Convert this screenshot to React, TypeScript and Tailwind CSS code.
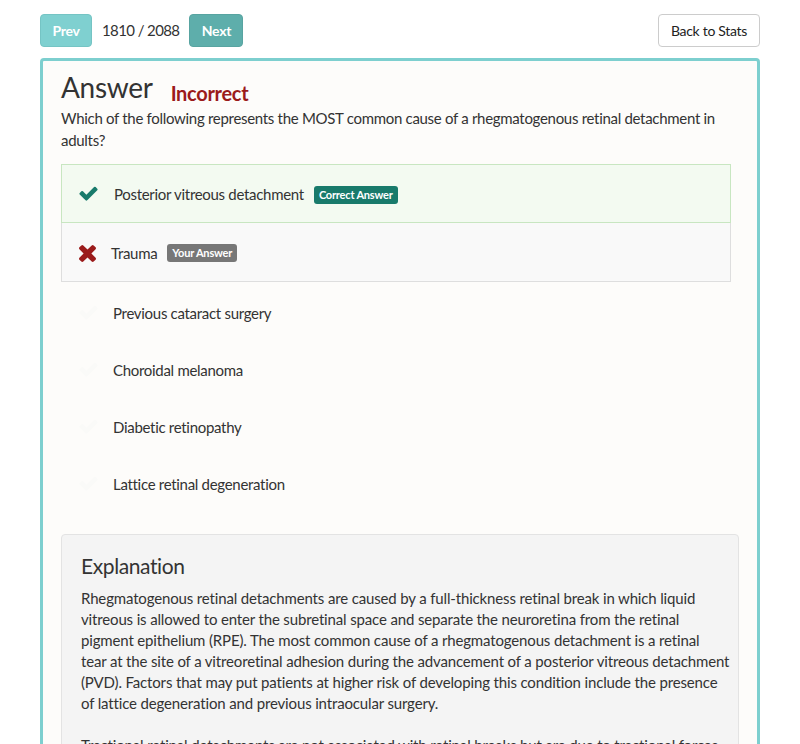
import React from "react";

const Check = ({ color }: { color: string }) => (
  <svg width="21" height="17" viewBox="0 0 1792 1408" fill={color}>
    <path d="M1671 274q0 40-28 68l-724 724-136 136q-28 28-68 28t-68-28l-136-136-362-362q-28-28-28-68t28-68l136-136q28-28 68-28t68 28l294 295 656-657q28-28 68-28t68 28l136 136q28 28 28 68z" />
  </svg>
);

const Times = ({ color }: { color: string }) => (
  <svg width="17" height="17" viewBox="0 0 1188 1188" fill={color}>
    <path d="M1188 956q0 40-28 68l-136 136q-28 28-68 28t-68-28l-294-294-294 294q-28 28-68 28t-68-28l-136-136q-28-28-28-68t28-68l294-294-294-294q-28-28-28-68t28-68l136-136q28-28 68-28t68 28l294 294 294-294q28-28 68-28t68 28l136 136q28 28 28 68t-28 68l-294 294 294 294q28 28 28 68z" />
  </svg>
);

const others = [
  "Previous cataract surgery",
  "Choroidal melanoma",
  "Diabetic retinopathy",
  "Lattice retinal degeneration",
];

const explanation1 = [
  "Rhegmatogenous retinal detachments are caused by a full-thickness retinal break in which liquid",
  "vitreous is allowed to enter the subretinal space and separate the neuroretina from the retinal",
  "pigment epithelium (RPE). The most common cause of a rhegmatogenous detachment is a retinal",
  "tear at the site of a vitreoretinal adhesion during the advancement of a posterior vitreous detachment",
  "(PVD). Factors that may put patients at higher risk of developing this condition include the presence",
  "of lattice degeneration and previous intraocular surgery.",
];

const explanation2 = [
  "Tractional retinal detachments are not associated with retinal breaks but are due to tractional forces",
  "from fibrovascular membranes, most commonly seen in proliferative diabetic retinopathy.",
];

export default function App() {
  return (
    <div
      className="bg-white min-h-[744px] px-10 pt-[14px] text-[#333] tracking-[-0.3px]"
      style={{ fontFamily: "Lato, 'Open Sans', sans-serif" }}
    >
      <div className="flex items-center justify-between h-[33px]">
        <div className="flex items-center">
          <button className="h-[33px] w-[52px] rounded-[4px] bg-[#7fd0d0] border border-[#75c4c4] text-white font-bold text-[14px]">
            Prev
          </button>
          <span className="ml-[10px] mr-[10px] text-[15px] tracking-[-0.6px] text-[#333]">1810 / 2088</span>
          <button className="h-[33px] w-[54px] rounded-[4px] bg-[#5eaeab] border border-[#58a4a1] text-white font-bold text-[14px]">
            Next
          </button>
        </div>
        <button className="h-[33px] w-[102px] rounded-[4px] bg-white border border-[#ccc] text-[14px] text-[#222]">
          Back to Stats
        </button>
      </div>

      <div className="mt-[11px] border-[3px] border-[#7dcfcf] rounded-[4px] bg-[#fdfcfa] pl-[18px] pr-[18px] pt-[9px] pb-10">
        <div className="flex items-baseline">
          <h1 className="text-[28px] leading-[34px] font-normal text-[#333]">Answer</h1>
          <span className="ml-[18px] text-[20px] font-bold text-[#9b1b1b] relative top-[3px]">Incorrect</span>
        </div>
        <p className="text-[15px] leading-[22px] mt-[2px] text-[#333]">
          <span className="whitespace-nowrap">
            Which of the following represents the MOST common cause of a rhegmatogenous retinal detachment in
          </span>
          <br />
          adults?
        </p>

        <div className="mt-[13px] mr-[8px]">
          <div className="h-[59px] flex items-center bg-[#f3faf1] border border-[#c8e6c1] pl-[16px] pt-[2px]">
            <Check color="#187a6b" />
            <span className="ml-[15px] text-[15px]">Posterior vitreous detachment</span>
            <span className="ml-[10px] bg-[#187a6b] text-white text-[11px] font-bold leading-[18px] px-[5px] rounded-[3px] tracking-[-0.2px]">
              Correct Answer
            </span>
          </div>
          <div className="h-[59px] flex items-center bg-[#f9f9f9] border border-[#dedede] border-t-0 pl-[17px] pt-[2px]">
            <Times color="#9b1b1b" />
            <span className="ml-[15px] text-[15px]">Trauma</span>
            <span className="ml-[10px] bg-[#777] text-white text-[11px] font-bold leading-[18px] px-[5px] rounded-[3px] tracking-[-0.2px]">
              Your Answer
            </span>
          </div>
          <div className="pt-[3px]">
            {others.map((t) => (
              <div key={t} className="h-[57px] flex items-center pl-[17px]">
                <Check color="#fafaf8" />
                <span className="ml-[14px] text-[15px]">{t}</span>
              </div>
            ))}
          </div>
        </div>

        <div className="mt-[21px] bg-[#f4f4f4] border border-[#e3e3e3] rounded-[4px] px-[19px] pt-[17px] pb-6">
          <h2 className="text-[21px] leading-[28px] font-normal text-[#333] tracking-[-0.4px]">Explanation</h2>
          <div className="mt-[8px] text-[15px] leading-[21px] tracking-[-0.15px] text-[#333]">
            <p>
              {explanation1.map((l, i) => (
                <span key={i} className="block whitespace-nowrap">
                  {l}
                </span>
              ))}
            </p>
            <p className="mt-[21px]">
              {explanation2.map((l, i) => (
                <span key={i} className="block whitespace-nowrap">
                  {l}
                </span>
              ))}
            </p>
          </div>
        </div>
      </div>
    </div>
  );
}
